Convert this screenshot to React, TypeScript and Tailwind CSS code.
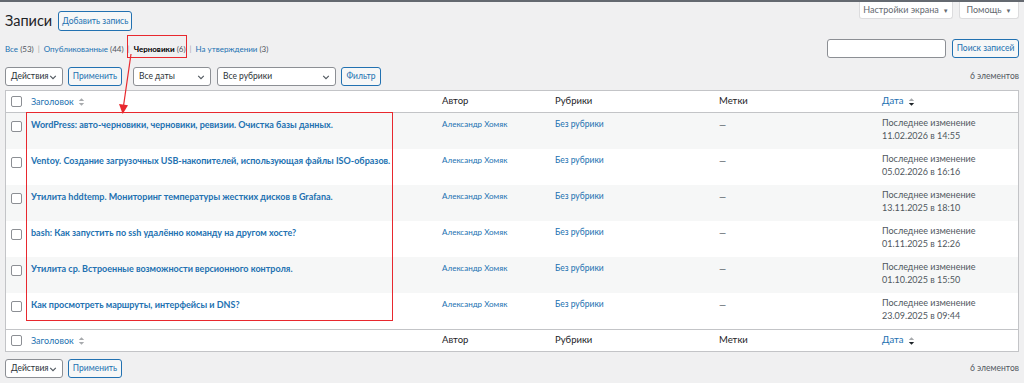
import { ReactNode } from 'react';

const font = { fontFamily: 'Lato, "Noto Sans", sans-serif' };

type Post = { title: string; date: string };

const posts: Post[] = [
  { title: 'WordPress: авто-черновики, черновики, ревизии. Очистка базы данных.', date: '11.02.2026 в 14:55' },
  { title: 'Ventoy. Создание загрузочных USB-накопителей, использующая файлы ISO-образов.', date: '05.02.2026 в 16:16' },
  { title: 'Утилита hddtemp. Мониторинг температуры жестких дисков в Grafana.', date: '13.11.2025 в 18:10' },
  { title: 'bash: Как запустить по ssh удалённо команду на другом хосте?', date: '01.11.2025 в 12:26' },
  { title: 'Утилита cp. Встроенные возможности версионного контроля.', date: '01.10.2025 в 15:50' },
  { title: 'Как просмотреть маршруты, интерфейсы и DNS?', date: '23.09.2025 в 09:44' },
];

const cols = 'grid grid-cols-[21px_410px_113px_164px_163px_1fr]';

function Checkbox() {
  return <span className="block w-[11px] h-[11px] rounded-[2px] border border-[#8c8f94] bg-white" />;
}

function Chevron() {
  return (
    <svg width="8" height="8" viewBox="0 0 10 10" className="shrink-0">
      <path d="M1.5 3.5 L5 7 L8.5 3.5" fill="none" stroke="#50575e" strokeWidth="1.4" />
    </svg>
  );
}

function Select({ label, width }: { label: string; width: string }) {
  return (
    <div className={`${width} h-[19px] flex items-center justify-between bg-white border border-[#8c8f94] rounded-[3px] pl-[5px] pr-[5px] text-[8.5px] text-[#2c3338] whitespace-nowrap`}>
      <span>{label}</span>
      <Chevron />
    </div>
  );
}

function Button({ children, className = '' }: { children: ReactNode; className?: string }) {
  return (
    <div className={`h-[19px] flex items-center justify-center border border-[#2271b1] rounded-[3px] bg-[#f6f7f7] text-[#2271b1] text-[8.5px] px-[8px] whitespace-nowrap ${className}`}>
      {children}
    </div>
  );
}

function SortIcon({ active }: { active?: boolean }) {
  return (
    <svg width="7" height="10" viewBox="0 0 7 10" className="ml-[4px]">
      <path d="M0.8 4 L3.5 1.3 L6.2 4 Z" fill="#a7aaad" />
      <path d="M0.8 6 L3.5 8.7 L6.2 6 Z" fill={active ? '#1d2327' : '#a7aaad'} />
    </svg>
  );
}

function HeaderRow({ top }: { top?: boolean }) {
  return (
    <div className={`${cols} h-[22px] items-center text-[9.5px] text-[#1d2327] ${top ? 'border-b' : 'border-t'} border-[#c3c4c7]`}>
      <div className="pl-[5px]"><Checkbox /></div>
      <div className="pl-[4px] flex items-center text-[#2271b1] text-[9px]">Заголовок<SortIcon /></div>
      <div className="pl-[5px]">Автор</div>
      <div className="pl-[5px]">Рубрики</div>
      <div className="pl-[5px]">Метки</div>
      <div className="pl-[5px] flex items-center text-[#2271b1]">Дата<SortIcon active /></div>
    </div>
  );
}

function Arrow() {
  return (
    <svg className="absolute left-0 top-0 pointer-events-none" width="400" height="130">
      <line x1="131" y1="54" x2="123.5" y2="106" stroke="#e8282e" strokeWidth="1.2" />
      <path d="M119 104 L128 105.3 L122.7 114 Z" fill="#e8282e" />
    </svg>
  );
}

export default function App() {
  return (
    <div style={font} className="relative w-[1024px] h-[383px] bg-[#f0f0f1] overflow-hidden">
      <div className="h-[2px] bg-[#646970]" />
      <div className="px-[5px]">
        <div className="flex justify-between items-start">
          <div className="flex items-center mt-[9px] gap-[6px]">
            <h1 className="text-[14.5px] text-[#1d2327] leading-none">Записи</h1>
            <Button className="h-[20px] w-[74px] px-0">Добавить запись</Button>
          </div>
          <div className="flex gap-[6px]">
            <div className="w-[94px] h-[17px] bg-white border border-t-0 border-[#dcdcde] rounded-b-[3px] flex items-center justify-center text-[9px] text-[#646970]">
              Настройки экрана <span className="ml-[4px] text-[6px]">▼</span>
            </div>
            <div className="w-[60px] h-[17px] bg-white border border-t-0 border-[#dcdcde] rounded-b-[3px] flex items-center justify-center text-[9px] text-[#646970]">
              Помощь <span className="ml-[4px] text-[6px]">▼</span>
            </div>
          </div>
        </div>

        <div className="flex justify-between items-center mt-[8px] h-[19px]">
          <div className="text-[8px] text-[#50575e] flex items-center whitespace-nowrap">
            <span className="text-[#2271b1]">Все</span>&nbsp;(53)
            <span className="mx-[4px] text-[#a7aaad]">|</span>
            <span className="text-[#2271b1]">Опубликованные</span>&nbsp;(44)
            <span className="mx-[4px] text-[#a7aaad]">|</span>
            <span className="text-black font-bold">Черновики</span>&nbsp;(6)
            <span className="mx-[4px] text-[#a7aaad]">|</span>
            <span className="text-[#2271b1]">На утверждении</span>&nbsp;(3)
          </div>
          <div className="flex items-center gap-[6px]">
            <div className="w-[119px] h-[19px] bg-white border border-[#8c8f94] rounded-[3px]" />
            <Button className="w-[67px] px-0">Поиск записей</Button>
          </div>
        </div>

        <div className="flex items-center justify-between mt-[9px]">
          <div className="flex items-center">
            <Select label="Действия" width="w-[58px]" />
            <Button className="ml-[5px] w-[54px] px-0">Применить</Button>
            <Select label="Все даты" width="w-[78px] ml-[11px]" />
            <Select label="Все рубрики" width="w-[119px] ml-[6px]" />
            <Button className="ml-[5px] w-[40px] px-0">Фильтр</Button>
          </div>
          <span className="text-[8.5px] text-[#50575e]">6 элементов</span>
        </div>

        <div className="mt-[4px] bg-white border border-[#c3c4c7]">
          <HeaderRow top />
          {posts.map((p, i) => (
            <div key={p.title} className={`${cols} h-[36px] items-start ${i % 2 === 0 ? 'bg-[#f6f7f7]' : 'bg-white'}`}>
              <div className="pl-[5px] pt-[8px]"><Checkbox /></div>
              <div className="pl-[4px] pt-[5px] text-[9px] font-bold text-[#2271b1] whitespace-nowrap">{p.title}</div>
              <div className="pl-[5px] pt-[5px] text-[8px] text-[#2271b1] whitespace-nowrap">Александр Хомяк</div>
              <div className="pl-[5px] pt-[5px] text-[8.5px] text-[#2271b1]">Без рубрики</div>
              <div className="pl-[5px] pt-[5px] text-[9px] text-[#50575e]">—</div>
              <div className="pl-[5px] pt-[3px] text-[9px] leading-[13px] text-[#50575e]">
                <div>Последнее изменение</div>
                <div>{p.date}</div>
              </div>
            </div>
          ))}
          <HeaderRow />
        </div>

        <div className="flex items-center justify-between mt-[7px]">
          <div className="flex items-center">
            <Select label="Действия" width="w-[58px]" />
            <Button className="ml-[5px] w-[54px] px-0">Применить</Button>
          </div>
          <span className="text-[8.5px] text-[#50575e]">6 элементов</span>
        </div>
      </div>

      <div className="absolute left-[127px] top-[35px] w-[60px] h-[23px] border border-[#e8282e]" />
      <div className="absolute left-[26px] top-[112px] w-[367px] h-[209px] border border-[#e8282e]" />
      <Arrow />
    </div>
  );
}
